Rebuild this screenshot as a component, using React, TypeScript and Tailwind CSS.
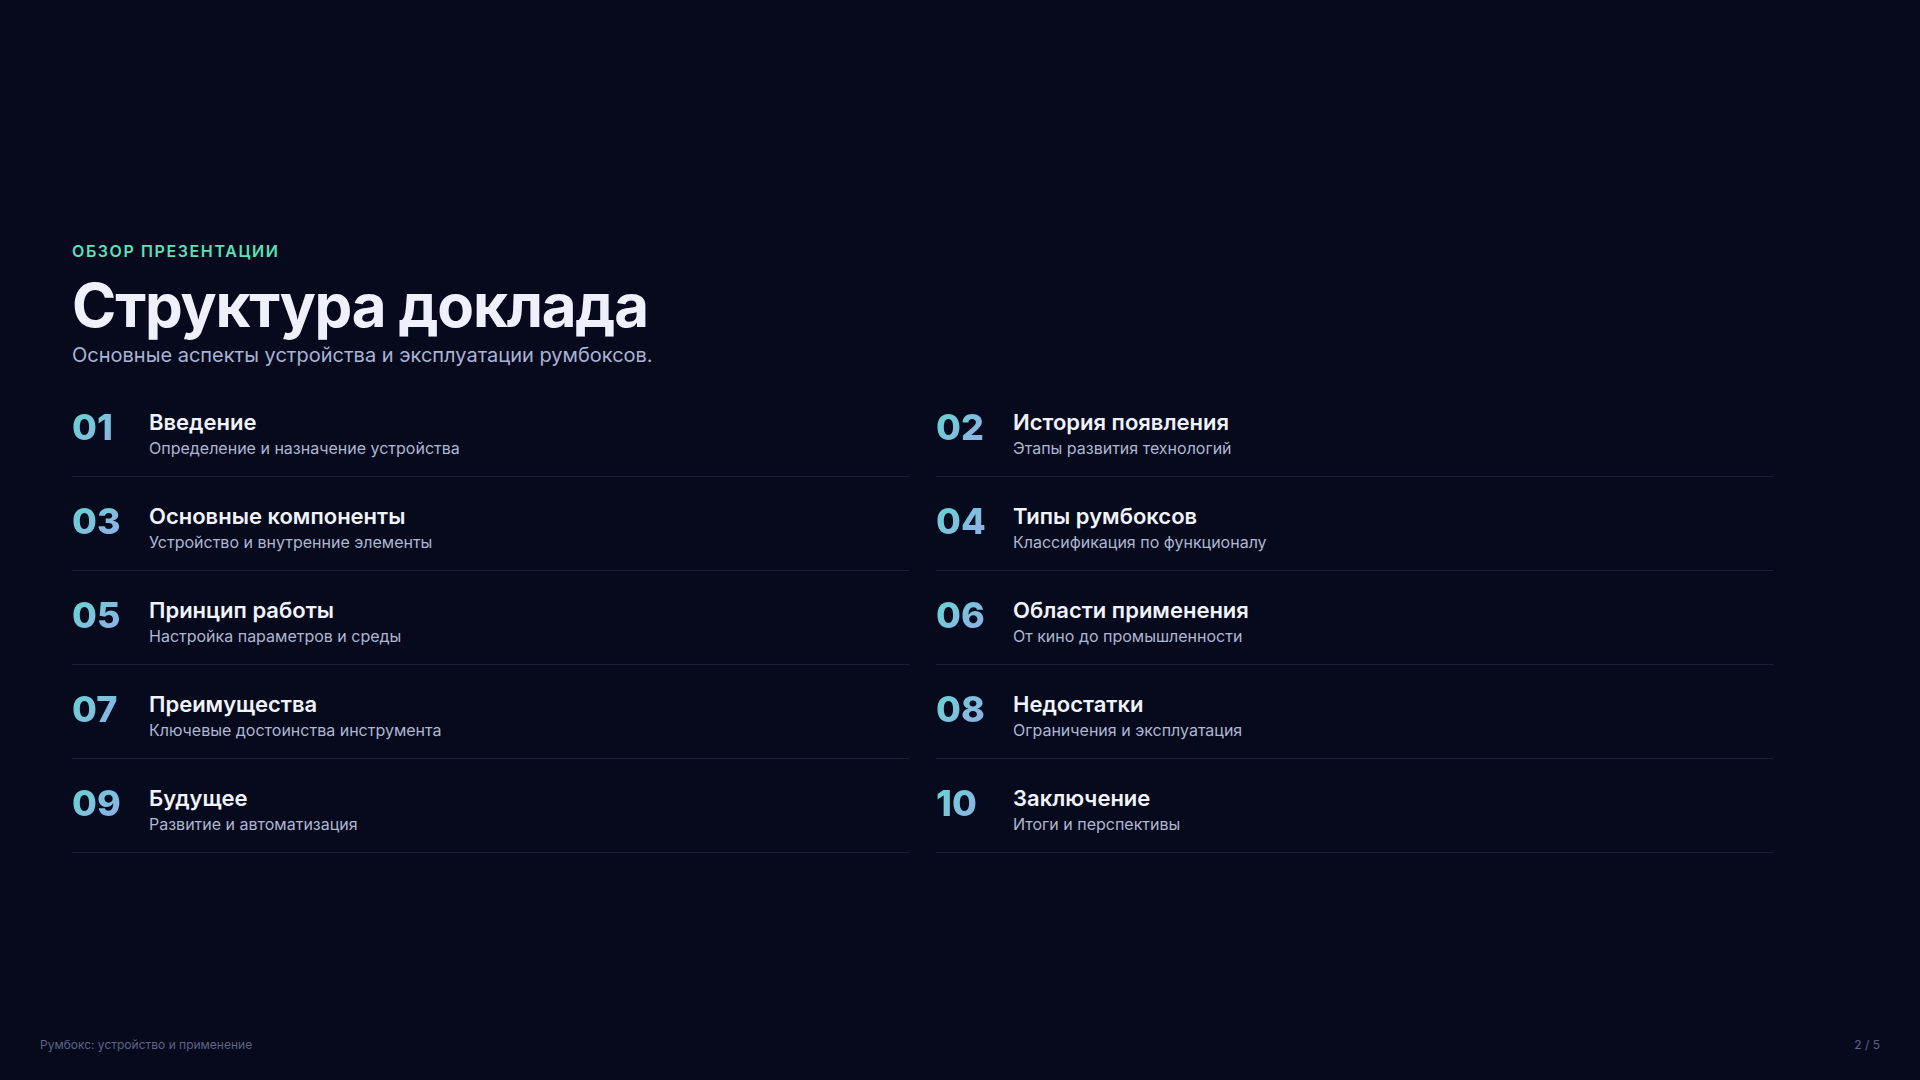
const items = [
  { n: "01", t: "Введение", s: "Определение и назначение устройства" },
  { n: "02", t: "История появления", s: "Этапы развития технологий" },
  { n: "03", t: "Основные компоненты", s: "Устройство и внутренние элементы" },
  { n: "04", t: "Типы румбоксов", s: "Классификация по функционалу" },
  { n: "05", t: "Принцип работы", s: "Настройка параметров и среды" },
  { n: "06", t: "Области применения", s: "От кино до промышленности" },
  { n: "07", t: "Преимущества", s: "Ключевые достоинства инструмента" },
  { n: "08", t: "Недостатки", s: "Ограничения и эксплуатация" },
  { n: "09", t: "Будущее", s: "Развитие и автоматизация" },
  { n: "10", t: "Заключение", s: "Итоги и перспективы" },
]

export default function App() {
  return (
    <div
      className="relative w-[1920px] h-[1080px] bg-[#060a1c] text-white overflow-hidden"
      style={{ fontFamily: "Inter, 'Noto Sans', sans-serif" }}
    >
      <div className="pl-[72px] pt-[241px] w-[1773px]">
        <div className="text-[16px] font-semibold tracking-[0.1em] text-[#5ee0b9] leading-5">
          ОБЗОР ПРЕЗЕНТАЦИИ
        </div>
        <h1 className="mt-[10px] text-[60px] font-bold leading-[68px] tracking-[-0.02em] text-[#eef1fc]">
          Структура доклада
        </h1>
        <p className="mt-[2px] text-[20px] leading-7 text-[#aab3d4]">
          Основные аспекты устройства и эксплуатации румбоксов.
        </p>
        <div className="mt-[14px] grid grid-cols-2 gap-x-[27px]">
          {items.map((it) => (
            <div
              key={it.n}
              className="flex h-[94px] pt-[24px] border-b border-[#1a2036]"
            >
              <div className="w-[77px] text-[36px] font-extrabold leading-[40px] bg-gradient-to-br from-[#5fd6d0] to-[#a38cf7] bg-clip-text text-transparent">
                {it.n}
              </div>
              <div>
                <div className="text-[22px] font-semibold leading-[30px] text-[#f1f3fb]">{it.t}</div>
                <div className="mt-[1px] text-[16px] leading-5 text-[#aeb6d2]">{it.s}</div>
              </div>
            </div>
          ))}
        </div>
      </div>
      <div className="absolute left-[40px] right-[40px] bottom-[26px] flex justify-between text-[12px] text-[#5c6384]">
        <span>Румбокс: устройство и применение</span>
        <span>2 / 5</span>
      </div>
    </div>
  )
}
